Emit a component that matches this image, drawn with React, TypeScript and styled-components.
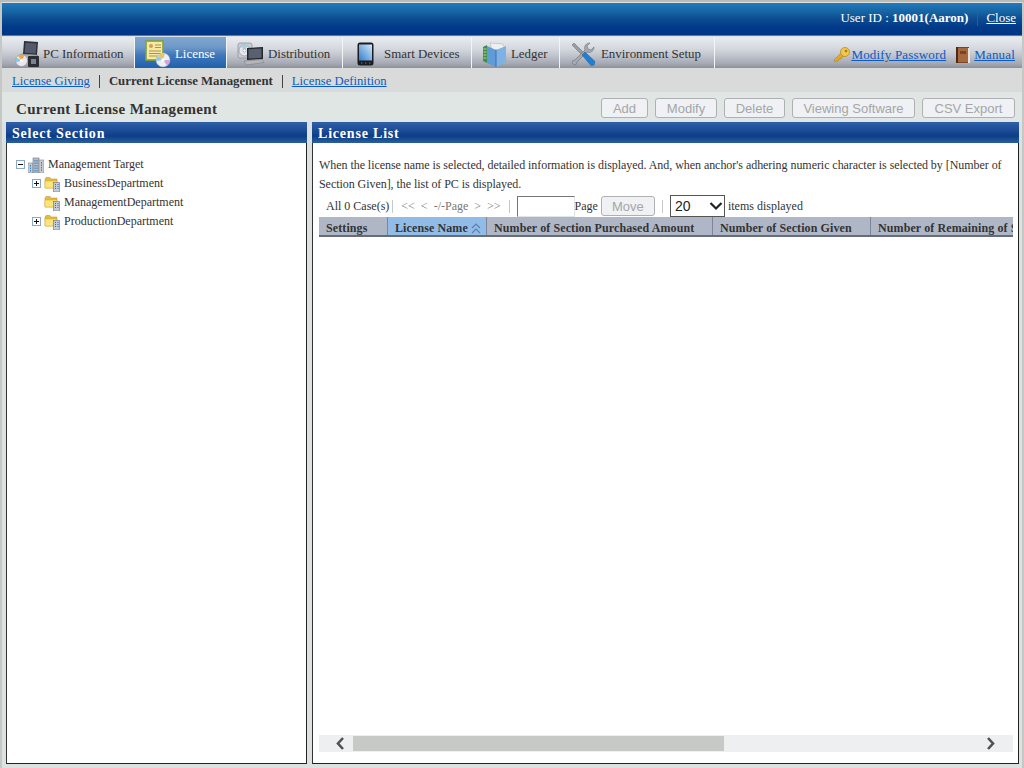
import React from 'react';
import styled, { createGlobalStyle } from 'styled-components';

const serif = '"Liberation Serif", "Times New Roman", serif';
const sans = '"Liberation Sans", Arial, sans-serif';

const GlobalStyle = createGlobalStyle`
  html, body {
    margin: 0;
    padding: 0;
    height: 100%;
    overflow: hidden;
    background: #d9dddc;
  }
`;

const Page = styled.div`
  width: 1024px;
  height: 768px;
  box-sizing: border-box;
  padding: 3px 2px 0 2px;
  display: flex;
  flex-direction: column;
  overflow: hidden;
  background: #dde2e1;
  font-family: ${serif};
  font-size: 12px;
  color: #333;
  box-shadow: inset 0 2px 0 #b9bbb9, inset 2px 0 0 #c6c8c6, inset -2px 0 0 #c6c8c6;
`;

const TopBar = styled.div`
  height: 32px;
  flex: none;
  display: flex;
  justify-content: flex-end;
  align-items: flex-start;
  padding: 7px 6px 0 0;
  box-sizing: border-box;
  background: linear-gradient(#2279bd 0, #15619f 10px, #0d4c91 16px, #023a8a 24px, #003584 100%);
  color: #fff;
  font-size: 13px;
  line-height: 16px;
  box-shadow: 0 1px 0 #6f7478;
`;

const UserId = styled.span`
  b { font-weight: 700; }
`;

const TopDivider = styled.span`
  width: 1px;
  height: 15px;
  margin: 1px 8px 0 9px;
  background: #2a5f9f;
`;

const CloseLink = styled.a`
  color: #fff;
  text-decoration: underline;
`;

const TabBar = styled.div`
  height: 31px;
  flex: none;
  margin-top: 2px;
  display: flex;
  justify-content: space-between;
  padding-left: 2px;
  background: linear-gradient(#e8ebef 0, #d8dce2 10px, #c2c6cf 18px, #a2a7b2 27px, #8d9098 100%);
`;

const Tabs = styled.div`
  display: flex;
`;

const Tab = styled.div<{ $width: number; $active?: boolean; $pad: number; $gap: number }>`
  width: ${(p) => p.$width}px;
  height: 100%;
  box-sizing: border-box;
  padding: 3px 0 0 ${(p) => p.$pad}px;
  display: flex;
  align-items: center;
  gap: ${(p) => p.$gap}px;
  border-right: 1px solid #f2f4f6;
  color: ${(p) => (p.$active ? '#fff' : '#333')};
  font-size: 12.9px;
  white-space: nowrap;
  background: ${(p) =>
    p.$active
      ? 'linear-gradient(#7fa6cf 0, #6f9ac8 10px, #3f78bb 18px, #1f61ad 100%)'
      : 'transparent'};
`;

const TabLinks = styled.div`
  display: flex;
  align-items: center;
  gap: 10px;
  padding: 5px 7px 0 0;
`;

const IconLink = styled.span<{ $gap: number }>`
  display: flex;
  align-items: center;
  gap: ${(p) => p.$gap}px;
`;

const BlueLink = styled.a`
  color: #0b5bc4;
  text-decoration: underline;
  font-size: 12.7px;
  white-space: nowrap;
`;

const TabLink = styled(BlueLink)`
  font-size: 13px;
  letter-spacing: 0.18px;
`;

const SubNav = styled.div`
  height: 24px;
  flex: none;
  display: flex;
  align-items: center;
  padding: 3px 0 0 10px;
  box-sizing: border-box;
  background: #d9dbda;
`;

const CurrentNav = styled.span`
  font-weight: 700;
  font-size: 12.8px;
  color: #333;
`;

const NavDivider = styled.span`
  width: 1px;
  height: 13px;
  margin: 0 9px;
  background: #444;
`;

const TitleRow = styled.div`
  height: 30px;
  flex: none;
  display: flex;
  justify-content: space-between;
  align-items: center;
  padding: 0 7px 0 14px;
  box-sizing: border-box;
  background: #e0e6e4;
`;

const PageTitle = styled.h1`
  margin: 4px 0 0;
  font-size: 15px;
  font-weight: 700;
  letter-spacing: 0.35px;
  color: #333;
`;

const ActionGroup = styled.div`
  display: flex;
  gap: 7px;
  margin-top: 2px;
`;

const GreyButton = styled.button<{ $width: number }>`
  width: ${(p) => p.$width}px;
  height: 20px;
  padding: 0;
  box-sizing: border-box;
  border: 1px solid #aeb0b2;
  border-radius: 3px;
  background: #eff1f4;
  color: #a4a6a8;
  font-family: ${sans};
  font-size: 13px;
`;

const Panels = styled.div`
  flex: 1;
  min-height: 0;
  display: flex;
  gap: 5px;
  padding: 0 3px 4px 4px;
  background: #dde1e0;
`;

const Panel = styled.section<{ $width: number }>`
  width: ${(p) => p.$width}px;
  display: flex;
  flex-direction: column;
  box-sizing: border-box;
  background: #fff;
  border-right: 1px solid #222;
  border-bottom: 1px solid #222;
  border-left: 1px solid #333;
`;

const PanelHeader = styled.h2`
  height: 21px;
  flex: none;
  margin: 0 -1px;
  padding: 2px 0 0 6px;
  box-sizing: border-box;
  background: linear-gradient(#2f5fa8 0, #1d4d96 8px, #0c3e86 14px, #2a5f9e 100%);
  color: #fff;
  font-size: 14px;
  line-height: 19px;
  font-weight: 700;
  letter-spacing: 0.8px;
`;

const Tree = styled.div`
  padding: 12px 0 0 9px;
  display: flex;
  flex-direction: column;
`;

const TreeRow = styled.div<{ $indent: number }>`
  height: 19px;
  display: flex;
  align-items: center;
  padding-left: ${(p) => p.$indent}px;
  color: #333;
  white-space: nowrap;
`;

const Toggle = styled.span`
  width: 9px;
  height: 9px;
  flex: none;
  margin-right: 3px;
  box-sizing: border-box;
  border: 1px solid #8aa6c8;
  background: #fff;
  position: relative;
  &::before {
    content: '';
    position: absolute;
    left: 1px;
    right: 1px;
    top: 3px;
    height: 1px;
    background: #111;
  }
`;

const PlusToggle = styled(Toggle)`
  &::after {
    content: '';
    position: absolute;
    top: 1px;
    bottom: 1px;
    left: 3px;
    width: 1px;
    background: #111;
  }
`;

const TogglePlaceholder = styled.span`
  width: 12px;
  flex: none;
`;

const TreeLabel = styled.span`
  margin-left: 4px;
`;

const ListBody = styled.div`
  flex: 1;
  min-height: 0;
  display: flex;
  flex-direction: column;
  padding: 13px 5px 11px 6px;
`;

const Description = styled.p`
  margin: 0;
  line-height: 19px;
  letter-spacing: -0.05px;
  color: #333;
  white-space: nowrap;
`;

const Pager = styled.div`
  height: 22px;
  flex: none;
  display: flex;
  align-items: center;
  padding-left: 7px;
  margin-top: 1px;
  white-space: nowrap;
`;

const PagerDivider = styled.span`
  width: 1px;
  height: 13px;
  margin: 0 6px 0 3px;
  background: #c4c8cc;
`;

const PagerNav = styled.span`
  color: #777;
  word-spacing: 3px;
  margin: 0 5px 0 2px;
`;

const PageInput = styled.span`
  width: 58px;
  height: 21px;
  box-sizing: border-box;
  border: 1px solid #e2e5e6;
  border-top: 1px solid #777;
  border-left: 1px solid #777;
  margin-left: 1px;
  background: #fff;
`;

const MoveButton = styled(GreyButton)`
  margin: 0 4px 0 3px;
`;

const PageSize = styled.span`
  width: 55px;
  height: 22px;
  margin: 0 3px 0 1px;
  box-sizing: border-box;
  border: 1px solid #555;
  display: flex;
  align-items: center;
  justify-content: space-between;
  padding: 0 1px 0 4px;
  font-family: ${sans};
  font-size: 14px;
  color: #222;
`;

const HeadRow = styled.div`
  height: 20px;
  flex: none;
  display: flex;
  overflow: hidden;
  background: #afb7c7;
  border-bottom: 2px solid #666c78;
  box-sizing: border-box;
`;

const HeadCell = styled.div<{ $width: number; $sorted?: boolean }>`
  width: ${(p) => p.$width}px;
  flex: none;
  box-sizing: border-box;
  padding: 4px 0 0 7px;
  display: flex;
  align-items: center;
  gap: 3px;
  border-right: 1px solid #7c8698;
  background: ${(p) => (p.$sorted ? '#92bce8' : 'transparent')};
  font-weight: 700;
  color: #333;
  letter-spacing: 0.1px;
  white-space: nowrap;
  overflow: hidden;
`;

const TableSpace = styled.div`
  flex: 1;
`;

const ScrollBar = styled.div`
  height: 17px;
  flex: none;
  display: flex;
  align-items: center;
  background: #eeeff0;
`;

const ScrollArrow = styled.span<{ $width: number; $left?: boolean }>`
  width: ${(p) => p.$width}px;
  box-sizing: border-box;
  flex: none;
  display: flex;
  justify-content: ${(p) => (p.$left ? 'flex-end' : 'center')};
  padding-right: ${(p) => (p.$left ? 8 : 0)}px;
  align-items: center;
`;

const ScrollThumb = styled.span`
  width: 371px;
  height: 15px;
  flex: none;
  background: #c7c9c6;
`;

const ScrollRest = styled.span`
  flex: 1;
`;

function PcIcon() {
  return (
    <svg width="26" height="26" viewBox="0 0 26 26">
      <path d="M9 0l14 1-1 13-14-1z" fill="#2e2f38" />
      <path d="M10.500 1.800l11 .8-.8 10-11-.8z" fill="#525a6c" />
      <path d="M6 13l16 1 2 2-10 3-9-3z" fill="#a9abb0" stroke="#666" strokeWidth=".5" />
      <circle cx="6.500" cy="19.500" r="6" fill="#e8e8ee" stroke="#888" strokeWidth=".5" />
      <path d="M6.500 19.500L3 14.800a6 6 0 0 1 6.500-.4z" fill="#e9a94a" />
      <path d="M6.500 19.500L1 21.500a6 6 0 0 1 .3-5z" fill="#8cc6df" />
      <circle cx="6.500" cy="19.500" r="1.500" fill="#fff" />
      <rect x="13" y="15" width="11" height="11" rx="1" fill="#2b2f35" />
      <rect x="16" y="18" width="5" height="5" fill="#78848e" />
    </svg>
  );
}

function LicenseIcon() {
  return (
    <svg width="28" height="28" viewBox="0 0 28 28">
      <rect x="1" y="1" width="17" height="19" fill="#f5e9a8" stroke="#5f9a38" strokeWidth="1.5" />
      <rect x="1" y="1" width="17" height="19" fill="none" stroke="#d9b22e" strokeWidth=".5" />
      <circle cx="6" cy="6" r="2" fill="#d99a4a" />
      <path d="M10 5h6M10 7.500h6M4 11h12M4 13.500h12M4 16h12" stroke="#b98f3a" strokeWidth="1" />
      <circle cx="18" cy="20" r="7" fill="#eeeef4" stroke="#9aa" strokeWidth=".5" />
      <path d="M18 20l-5-4a7 7 0 0 1 7-2.700z" fill="#e4c56a" />
      <path d="M18 20l-6.800 1a7 7 0 0 1 1.500-5z" fill="#8ccbe0" />
      <path d="M18 20l4 5.500a7 7 0 0 0 3-5.500z" fill="#d7a3d5" />
      <circle cx="18" cy="20" r="1.800" fill="#fff" />
    </svg>
  );
}

function DistributionIcon() {
  return (
    <svg width="28" height="24" viewBox="0 0 28 24">
      <rect x="1" y="1" width="14" height="15" rx="2" fill="#c9ccd1" stroke="#8a8d92" strokeWidth=".7" />
      <circle cx="7.500" cy="8.500" r="5.500" fill="#e6e7ec" stroke="#8b8f96" strokeWidth=".7" />
      <path d="M7.500 8.500L4 4a5.500 5.500 0 0 1 7-.2z" fill="#a8d0df" />
      <circle cx="7.500" cy="8.500" r="1.500" fill="#fff" stroke="#888" strokeWidth=".5" />
      <path d="M10 6l16-1v12l-16 1z" fill="#25272f" />
      <path d="M11.500 7.200l13-.8v9.400l-13 .8z" fill="#596070" />
      <path d="M7 19l18-1.500 2 3-18 2.500z" fill="#b4b6ba" stroke="#77797d" strokeWidth=".5" />
    </svg>
  );
}

function SmartDeviceIcon() {
  return (
    <svg width="17" height="24" viewBox="0 0 17 24">
      <rect x=".5" y=".5" width="16" height="23" rx="2.500" fill="#1c1c20" />
      <rect x="2" y="2.500" width="13" height="16" fill="url(#screen)" />
      <defs>
        <linearGradient id="screen" x1="0" y1="1" x2="1" y2="0">
          <stop offset="0" stopColor="#2f7fd0" />
          <stop offset="1" stopColor="#d6e8f6" />
        </linearGradient>
      </defs>
      <path d="M4 21h1.500M8 21h1.500M12 21h1.500" stroke="#777" strokeWidth="1" />
    </svg>
  );
}

function LedgerIcon() {
  return (
    <svg width="26" height="25" viewBox="0 0 26 25">
      <path d="M1 5l4-2v18l-4-2z" fill="#3f8f4a" />
      <path d="M1.500 7h3M1.500 10h3M1.500 13h3M1.500 16h3" stroke="#b7d37a" strokeWidth="1" />
      <path d="M8 1l13 1 2 5-13 1z" fill="#eef0ee" stroke="#aaa" strokeWidth=".5" />
      <path d="M5 4l9 4v17l-9-4z" fill="#5e9bd8" />
      <path d="M14 8l10-4v16l-10 5z" fill="#7fb2e4" />
      <path d="M14 8v17" stroke="#3c6ea8" strokeWidth="1" />
    </svg>
  );
}

function ToolsIcon() {
  return (
    <svg width="25" height="24" viewBox="0 0 25 24">
      <path d="M1 3l2-2 11 11-2 2z" fill="#9a9da0" stroke="#66696c" strokeWidth=".5" />
      <path d="M23 5a5 5 0 0 1-7 5L6 20a3 3 0 0 1-3 3l-2-2a3 3 0 0 1 3-3L14 8a5 5 0 0 1 5-7l-3 3 1 3 3 1z" fill="#a7aaad" stroke="#6f7275" strokeWidth=".6" />
      <path d="M11 13l3-3 10 9.500-1 3.500-3 .5z" fill="#1f7fd4" stroke="#1a5f9f" strokeWidth=".5" />
    </svg>
  );
}

function KeyIcon() {
  return (
    <svg width="18" height="16" viewBox="0 0 18 16">
      <path d="M1 13l7-7 3 3-2 1-1 2-2 0-1 2-3 1z" fill="#e0a92c" stroke="#a97a12" strokeWidth=".5" />
      <circle cx="12" cy="5" r="4.500" fill="#f2c64f" stroke="#b08418" strokeWidth=".7" />
      <circle cx="13" cy="4" r="1.300" fill="#a97a12" />
    </svg>
  );
}

function BookIcon() {
  return (
    <svg width="14" height="16" viewBox="0 0 14 16">
      <rect x="0" y="0" width="13" height="16" fill="#7a4526" />
      <rect x="2" y="1" width="10" height="14" fill="#a6683d" />
      <rect x="0" y="0" width="2" height="16" fill="#4c2a16" />
      <rect x="12" y="1" width="2" height="15" fill="#e6e3d8" />
      <rect x="4" y="4" width="6" height="3" fill="#7a4526" />
    </svg>
  );
}

function BuildingIcon() {
  return (
    <svg width="16" height="16" viewBox="0 0 16 16">
      <rect x="0" y="6" width="5" height="10" fill="#c8ccd2" stroke="#7f8791" strokeWidth=".6" />
      <rect x="5" y="1" width="6" height="15" fill="#b7bec8" stroke="#6f7782" strokeWidth=".6" />
      <rect x="11" y="3" width="5" height="13" fill="#c8ccd2" stroke="#7f8791" strokeWidth=".6" />
      <path d="M2.500 8v7M7 3v12M9 3v12M13.500 5v10" stroke="#2c7fd0" strokeWidth="1" strokeDasharray="1.500 1" />
    </svg>
  );
}

function DepartmentIcon() {
  return (
    <svg width="16" height="16" viewBox="0 0 16 16">
      <path d="M1 3l1-1.500h4L7 3h6v9H1z" fill="#e6bb3d" stroke="#b98f22" strokeWidth=".5" />
      <path d="M1 5h12v7H1z" fill="#fbe67c" stroke="#d0a72a" strokeWidth=".5" />
      <rect x="9.500" y="6.500" width="6" height="9.500" fill="#c7ccd4" stroke="#69717d" strokeWidth=".6" />
      <path d="M11 8.500h1M13.500 8.500h1M11 10.500h1M13.500 10.500h1M11 12.500h1M13.500 12.500h1" stroke="#1f6fc8" strokeWidth="1" />
    </svg>
  );
}

function SortIcon() {
  return (
    <svg width="10" height="11" viewBox="0 0 10 11">
      <path d="M1 5l4-4 4 4M1 10l4-4 4 4" fill="none" stroke="#5d7fae" strokeWidth="1.200" />
    </svg>
  );
}

function ChevronIcon() {
  return (
    <svg width="14" height="10" viewBox="0 0 14 10">
      <path d="M1.500 2l5.500 5.500L12.500 2" fill="none" stroke="#222" strokeWidth="2.200" />
    </svg>
  );
}

function ScrollChevron({ flip }: { flip?: boolean }) {
  return (
    <svg width="10" height="13" viewBox="0 0 10 13">
      <path d={flip ? 'M2 1l5 5.500-5 5.500' : 'M8 1L3 6.500l5 5.500'} fill="none" stroke="#505254" strokeWidth="2.600" />
    </svg>
  );
}

const tabs = [
  { label: 'PC Information', width: 131, pad: 11, gap: 2, icon: <PcIcon /> },
  { label: 'License', width: 92, pad: 10, gap: 2, icon: <LicenseIcon />, active: true },
  { label: 'Distribution', width: 116, pad: 10, gap: 3, icon: <DistributionIcon /> },
  { label: 'Smart Devices', width: 129, pad: 14, gap: 10, icon: <SmartDeviceIcon /> },
  { label: 'Ledger', width: 88, pad: 10, gap: 3, icon: <LedgerIcon /> },
  { label: 'Environment Setup', width: 155, pad: 11, gap: 5, icon: <ToolsIcon /> },
];

const actions = [
  { label: 'Add', width: 47 },
  { label: 'Modify', width: 62 },
  { label: 'Delete', width: 61 },
  { label: 'Viewing Software', width: 123 },
  { label: 'CSV Export', width: 93 },
];

const columns = [
  { label: 'Settings', width: 69 },
  { label: 'License Name', width: 99, sorted: true },
  { label: 'Number of Section Purchased Amount', width: 226 },
  { label: 'Number of Section Given', width: 158 },
  { label: 'Number of Remaining of Section', width: 170 },
];

export default function App() {
  return (
    <Page>
      <GlobalStyle />
      <TopBar>
        <UserId>
          User ID : <b>10001(Aaron)</b>
        </UserId>
        <TopDivider />
        <CloseLink>Close</CloseLink>
      </TopBar>

      <TabBar>
        <Tabs>
          {tabs.map((tab) => (
            <Tab key={tab.label} $width={tab.width} $pad={tab.pad} $gap={tab.gap} $active={tab.active}>
              {tab.icon}
              {tab.label}
            </Tab>
          ))}
        </Tabs>
        <TabLinks>
          <IconLink $gap={0}>
            <KeyIcon />
            <TabLink>Modify Password</TabLink>
          </IconLink>
          <IconLink $gap={4}>
            <BookIcon />
            <TabLink>Manual</TabLink>
          </IconLink>
        </TabLinks>
      </TabBar>

      <SubNav>
        <BlueLink>License Giving</BlueLink>
        <NavDivider />
        <CurrentNav>Current License Management</CurrentNav>
        <NavDivider />
        <BlueLink>License Definition</BlueLink>
      </SubNav>

      <TitleRow>
        <PageTitle>Current License Management</PageTitle>
        <ActionGroup>
          {actions.map((action) => (
            <GreyButton key={action.label} $width={action.width}>
              {action.label}
            </GreyButton>
          ))}
        </ActionGroup>
      </TitleRow>

      <Panels>
        <Panel $width={301}>
          <PanelHeader>Select Section</PanelHeader>
          <Tree>
            <TreeRow $indent={0}>
              <Toggle />
              <BuildingIcon />
              <TreeLabel>Management Target</TreeLabel>
            </TreeRow>
            <TreeRow $indent={16}>
              <PlusToggle />
              <DepartmentIcon />
              <TreeLabel>BusinessDepartment</TreeLabel>
            </TreeRow>
            <TreeRow $indent={16}>
              <TogglePlaceholder />
              <DepartmentIcon />
              <TreeLabel>ManagementDepartment</TreeLabel>
            </TreeRow>
            <TreeRow $indent={16}>
              <PlusToggle />
              <DepartmentIcon />
              <TreeLabel>ProductionDepartment</TreeLabel>
            </TreeRow>
          </Tree>
        </Panel>

        <Panel $width={707}>
          <PanelHeader>License List</PanelHeader>
          <ListBody>
            <Description>
              When the license name is selected, detailed information is displayed. And, when anchor's adhering numeric character is selected by [Number of
              <br />
              Section Given], the list of PC is displayed.
            </Description>
            <Pager>
              All 0 Case(s)
              <PagerDivider />
              <PagerNav>&lt;&lt; &lt; -/-Page &gt; &gt;&gt;</PagerNav>
              <PagerDivider />
              <PageInput />
              Page
              <MoveButton $width={54}>Move</MoveButton>
              <PagerDivider />
              <PageSize>
                20
                <ChevronIcon />
              </PageSize>
              items displayed
            </Pager>
            <HeadRow>
              {columns.map((column) => (
                <HeadCell key={column.label} $width={column.width} $sorted={column.sorted}>
                  {column.label}
                  {column.sorted && <SortIcon />}
                </HeadCell>
              ))}
            </HeadRow>
            <TableSpace />
            <ScrollBar>
              <ScrollArrow $width={34} $left>
                <ScrollChevron />
              </ScrollArrow>
              <ScrollThumb />
              <ScrollRest />
              <ScrollArrow $width={44}>
                <ScrollChevron flip />
              </ScrollArrow>
            </ScrollBar>
          </ListBody>
        </Panel>
      </Panels>
    </Page>
  );
}
